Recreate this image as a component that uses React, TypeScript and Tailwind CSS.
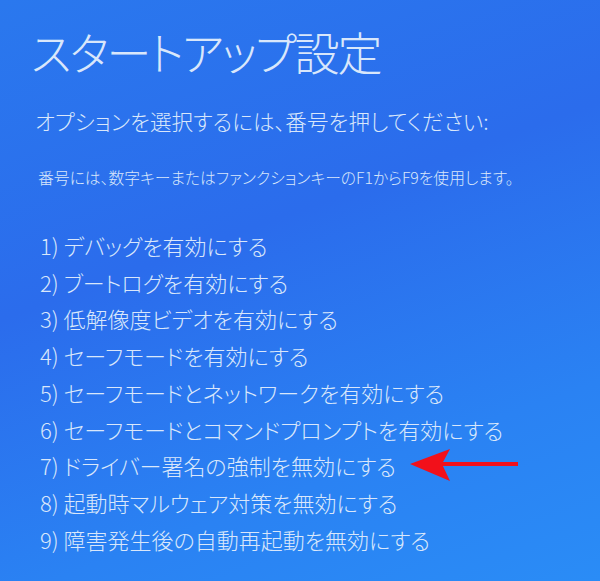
const OPTIONS = [
  "1) デバッグを有効にする",
  "2) ブートログを有効にする",
  "3) 低解像度ビデオを有効にする",
  "4) セーフモードを有効にする",
  "5) セーフモードとネットワークを有効にする",
  "6) セーフモードとコマンドプロンプトを有効にする",
  "7) ドライバー署名の強制を無効にする",
  "8) 起動時マルウェア対策を無効にする",
  "9) 障害発生後の自動再起動を無効にする",
];

function Arrow() {
  return (
    <svg width="112" height="36" viewBox="0 0 112 36" className="ml-[12px]">
      <rect x="30" y="14" width="80" height="4" fill="#f2101a" />
      <path d="M2 16 L42 1 L34 16 L42 33 Z" fill="#f2101a" />
    </svg>
  );
}

export default function App() {
  return (
    <div
      className="w-[600px] h-[581px] overflow-hidden bg-[linear-gradient(160deg,#2a78ee_0%,#2b6cec_40%,#2a82f3_75%,#2a8cf6_100%)] text-[#d9e7fb] font-light [font-feature-settings:'palt']"
      style={{ fontFamily: '"Noto Sans CJK JP", "Noto Sans", sans-serif' }}
    >
      <div className="pl-[31px] pt-[23px]">
        <h1 className="text-[45px] leading-[57px] tracking-[-2px]">スタートアップ設定</h1>
        <p className="mt-[27px] pl-[4px] text-[21.5px] leading-[28px] tracking-[0.1px]">
          オプションを選択するには、番号を押してください:
        </p>
        <p className="mt-[33px] pl-[7px] text-[15.8px] leading-[20px]">
          番号には、数字キーまたはファンクションキーのF1からF9を使用します。
        </p>
        <ul className="mt-[39px] pl-[9px]">
          {OPTIONS.map((o, i) => (
            <li key={i} className="flex items-center h-[36.75px] text-[22px]">
              <span>{o}</span>
              {i === 6 && <Arrow />}
            </li>
          ))}
        </ul>
      </div>
    </div>
  );
}
